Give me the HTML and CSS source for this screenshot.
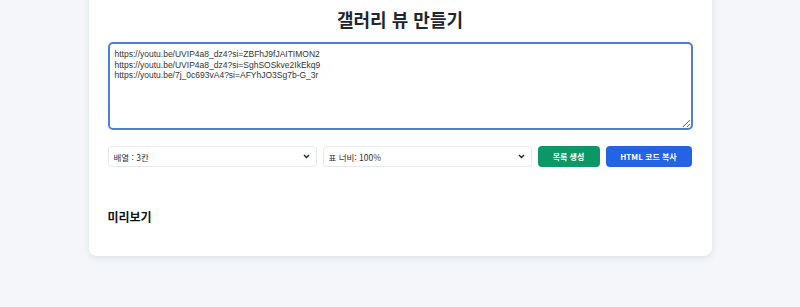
FILE: index.html
```html
<!DOCTYPE html>
<html lang="ko">
<head>
  <meta charset="UTF-8" />
  <meta name="viewport" content="width=device-width, initial-scale=1.0"/>
  <title>갤러리 뷰 만들기</title>
  <link rel="stylesheet" href="styles.css">
</head>
<body>
  <div class="container">
    <h1>갤러리 뷰 만들기</h1>
    <textarea id="urls" class="url-input">https://youtu.be/UVIP4a8_dz4?si=ZBFhJ9fJAITIMON2
https://youtu.be/UVIP4a8_dz4?si=SghSOSkve2IkEkq9
https://youtu.be/7j_0c693vA4?si=AFYhJO3Sg7b-G_3r</textarea>
    <div class="controls">
      <div class="select-wrap">
        <select id="columns">
          <option value="3" selected>배열 : 3칸</option>
          <option value="2">배열 : 2칸</option>
          <option value="4">배열 : 4칸</option>
        </select>
        <svg class="chevron" width="7" height="5" viewBox="0 0 7 5"><path d="M1 1l2.5 2.5L6 1" fill="none" stroke="#222" stroke-width="1.4"/></svg>
      </div>
      <div class="select-wrap">
        <select id="width">
          <option value="100" selected>표 너비: 100%</option>
          <option value="80">표 너비: 80%</option>
        </select>
        <svg class="chevron" width="7" height="5" viewBox="0 0 7 5"><path d="M1 1l2.5 2.5L6 1" fill="none" stroke="#222" stroke-width="1.4"/></svg>
      </div>
      <button class="btn btn-green">목록 생성</button>
      <button class="btn btn-blue">HTML 코드 복사</button>
    </div>
    <h2>미리보기</h2>
    <div class="preview" id="preview"></div>
  </div>
</body>
</html>
```

FILE: styles.css
```css
* {
  box-sizing: border-box;
  margin: 0;
  padding: 0;
}
body {
  font-family: 'Noto Sans CJK KR', 'Noto Sans', sans-serif;
  background-color: #f4f6f9;
  color: #222;
  height: 307px;
  overflow: hidden;
}
.container {
  width: 623px;
  margin: -12px auto 0;
  background: #ffffff;
  border-radius: 8px;
  box-shadow: 0 2px 6px rgba(30, 50, 80, 0.1);
  padding: 18px 19px 11px;
}
h1 {
  text-align: center;
  font-size: 18px;
  font-weight: 700;
  color: #1f2533;
  line-height: 26px;
  margin-bottom: 10px;
}
.url-input {
  display: block;
  width: 100%;
  height: 88px;
  border: 2px solid #4d7fdc;
  border-radius: 5px;
  padding: 5px 5px;
  font-family: 'Liberation Sans', 'Noto Sans CJK KR', sans-serif;
  font-size: 8.5px;
  line-height: 10.5px;
  color: #333;
  outline: none;
}
.controls {
  display: flex;
  align-items: center;
  gap: 6px;
  margin-top: 16px;
}
.select-wrap {
  position: relative;
  width: 209px;
  height: 21px;
}
.chevron {
  position: absolute;
  right: 7px;
  top: 8px;
  pointer-events: none;
}
select {
  display: block;
  appearance: none;
  width: 100%;
  height: 21px;
  border: 1px solid #e6e9ee;
  border-radius: 4px;
  background: #fff;
  padding: 0 5px;
  font-family: 'Noto Sans CJK KR', sans-serif;
  font-size: 8.5px;
  color: #333;
}
.btn {
  height: 21px;
  border: none;
  border-radius: 4px;
  color: #fff;
  font-family: 'Noto Sans CJK KR', sans-serif;
  font-size: 8px;
  font-weight: 700;
  cursor: pointer;
}
.btn-green {
  width: 62px;
  background: #0c9768;
}
.btn-blue {
  width: 86px;
  background: #2563e6;
}
h2 {
  font-size: 12px;
  font-weight: 700;
  color: #111;
  margin-top: 42px;
  line-height: 16px;
}
.preview {
  min-height: 20px;
}
```
